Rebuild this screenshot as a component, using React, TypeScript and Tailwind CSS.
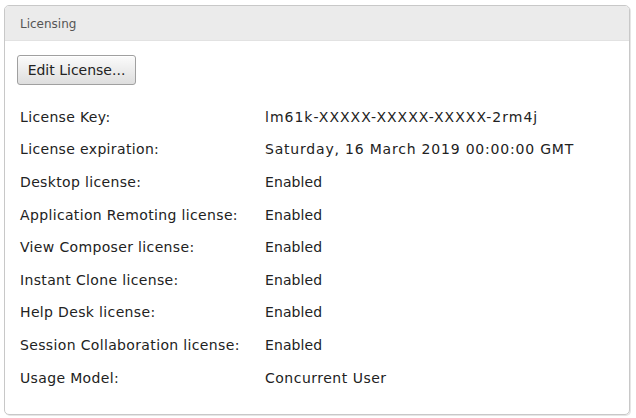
const rows: { label: string; value: string; spacing: string }[] = [
  { label: "License Key:", value: "lm61k-XXXXX-XXXXX-XXXXX-2rm4j", spacing: "tracking-[1px]" },
  { label: "License expiration:", value: "Saturday, 16 March 2019 00:00:00 GMT", spacing: "tracking-[0.8px]" },
  { label: "Desktop license:", value: "Enabled", spacing: "tracking-[0.1px]" },
  { label: "Application Remoting license:", value: "Enabled", spacing: "tracking-[0.1px]" },
  { label: "View Composer license:", value: "Enabled", spacing: "tracking-[0.1px]" },
  { label: "Instant Clone license:", value: "Enabled", spacing: "tracking-[0.1px]" },
  { label: "Help Desk license:", value: "Enabled", spacing: "tracking-[0.1px]" },
  { label: "Session Collaboration license:", value: "Enabled", spacing: "tracking-[0.1px]" },
  { label: "Usage Model:", value: "Concurrent User", spacing: "tracking-[0.5px]" },
];

export default function App() {
  return (
    <div className="w-[636px] h-[418px] bg-white pt-[5px] pl-[4px] font-['DejaVu_Sans',Verdana,sans-serif]">
      <div className="w-[626px] h-[410px] rounded-[5px] border border-[#c8c8c8] shadow-[1px_1px_0_#e6e6e6] overflow-hidden">
        <div className="h-[35px] bg-[#ebebeb] bg-[radial-gradient(#d9d9d9_0.6px,transparent_0.6px)] bg-[length:4px_4px] border-b border-[#e2e2e2] flex items-center pl-[15px] pt-[1px] text-[12px] text-[#555]">
          Licensing
        </div>
        <div className="pl-[12px] pt-[14px]">
          <button className="h-[30px] w-[119px] rounded-[3px] border border-[#a0a0a0] bg-gradient-to-b from-[#fbfbfb] to-[#dedede] text-[14px] text-[#222] shadow-[inset_0_1px_0_#fff]">
            Edit License...
          </button>
          <div className="mt-[16px] pl-[3px] text-[14px] text-[#222]">
            {rows.map((row) => (
              <div key={row.label} className="flex h-[32.6px] items-center">
                <div className="w-[245px] shrink-0 tracking-[0.35px]">{row.label}</div>
                <div className={row.spacing}>{row.value}</div>
              </div>
            ))}
          </div>
        </div>
      </div>
    </div>
  );
}
